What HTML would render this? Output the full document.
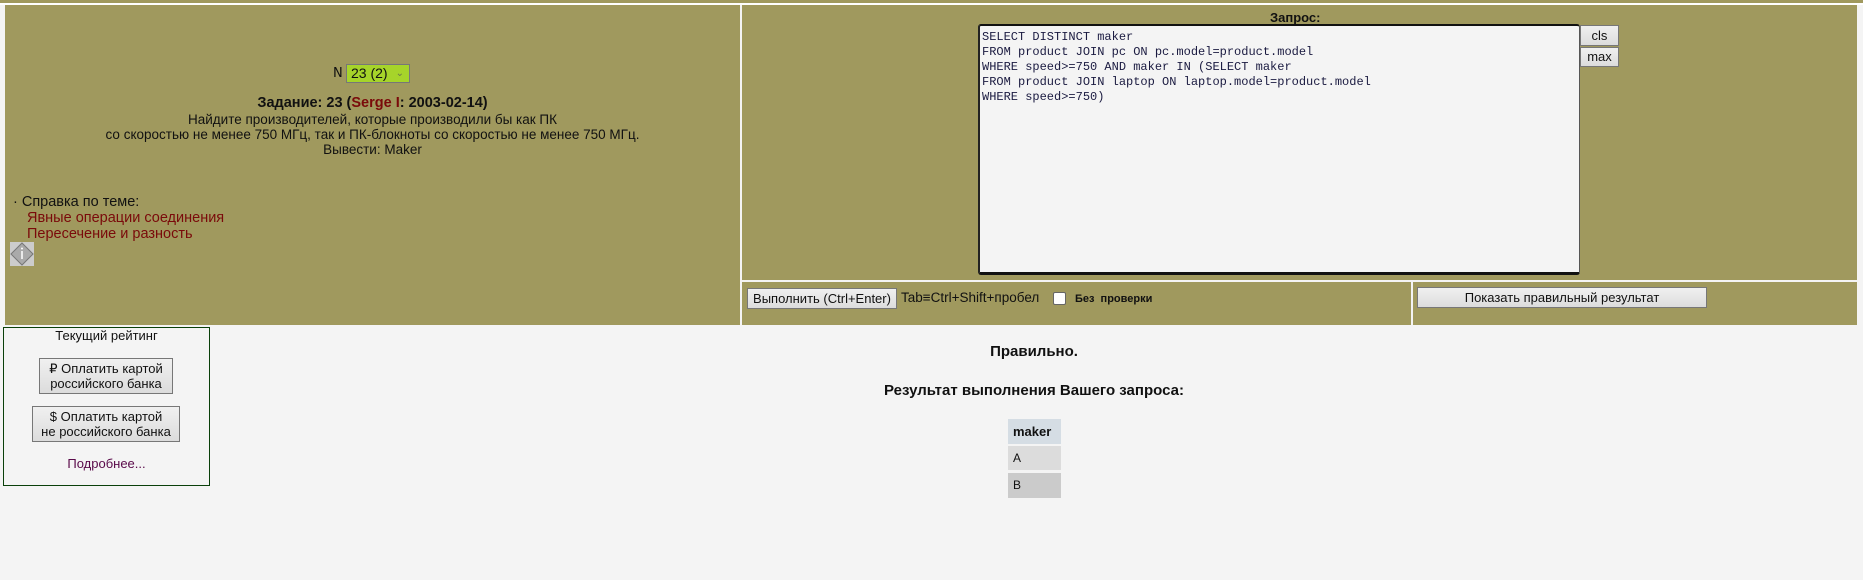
<!DOCTYPE html>
<html><head><meta charset="utf-8">
<style>
*{margin:0;padding:0;box-sizing:border-box}
body{width:1863px;height:580px;background:#f4f4f4;position:relative;overflow:hidden;font-family:"DejaVu Sans","Liberation Sans",sans-serif;color:#111}
.a{position:absolute}
.p{background:#a0995e}
.c{text-align:center}
.btn{position:absolute;background:linear-gradient(#f0f0f0,#dcdcdc);border:1px solid #777;font-family:"Liberation Sans",sans-serif;font-size:13px;color:#111;text-align:center}
a{color:#7a0a0a;text-decoration:none}
</style></head><body>
<div class="a" style="left:0;top:0;width:1863px;height:5px;background:#a0995e"></div>
<div class="a" style="left:0;top:3px;width:1863px;height:2px;background:#fff"></div>
<div class="a p" style="left:5px;top:5px;width:735px;height:320px"></div>
<div class="a p" style="left:742px;top:5px;width:1115px;height:275px"></div>
<div class="a p" style="left:742px;top:282px;width:669px;height:43px"></div>
<div class="a p" style="left:1413px;top:282px;width:444px;height:43px"></div>

<div class="a" style="left:333px;top:65px;font-size:13px;line-height:17px">N</div>
<div class="a" style="left:346px;top:64px;width:64px;height:19px;background:#a6d42a;border:1px solid #777;font-family:'Liberation Sans',sans-serif;font-size:14px;line-height:17px;padding-left:4px">23 (2)<span style="position:absolute;right:5px;top:0;color:#6a7a4a;font-size:10px">&#8964;</span></div>

<div class="a c" style="left:5px;top:95px;width:735px;font-family:'Liberation Sans',sans-serif;font-size:13px;line-height:15px">
<div style="font-weight:bold;font-size:14.5px;line-height:17px">Задание: 23 (<span style="color:#7a0a0a">Serge I</span>: 2003-02-14)</div>
<div style="font-size:13.5px">Найдите производителей, которые производили бы как ПК</div>
<div style="font-size:13.5px">со скоростью не менее 750 МГц, так и ПК-блокноты со скоростью не менее 750 МГц.</div>
<div style="font-size:13.5px">Вывести: Maker</div>
</div>

<div class="a" style="left:13px;top:194px;font-size:14.5px;line-height:16px;font-family:'Liberation Sans',sans-serif">
<div>· Справка по теме:</div>
<div style="padding-left:14px"><a>Явные операции соединения</a></div>
<div style="padding-left:14px"><a>Пересечение и разность</a></div>
</div>
<div class="a" style="left:10px;top:242px;width:24px;height:24px;background:#ccc">
<svg width="24" height="24" viewBox="0 0 24 24"><polygon points="12,1 23,12 12,23 1,12" fill="#aaa" stroke="#777"/><line x1="12" y1="9" x2="12" y2="17" stroke="#fff" stroke-width="1.5"/><circle cx="12" cy="6.5" r="1" fill="#fff"/></svg></div>

<div class="a" style="left:1270px;top:10px;font-family:'Liberation Sans',sans-serif;font-weight:bold;font-size:13px">Запрос:</div>
<div class="a" style="left:978px;top:24px;width:602px;height:251px;background:#f4f4f4;border:1px solid #555;border-top:2px solid #111;border-bottom:3px solid #111;border-left:2px solid #222;border-radius:3px;font-family:'Liberation Mono',monospace;font-size:12px;line-height:15px;padding:4px 2px;color:#1a1a40;white-space:pre">SELECT DISTINCT maker
FROM product JOIN pc ON pc.model=product.model
WHERE speed&gt;=750 AND maker IN (SELECT maker
FROM product JOIN laptop ON laptop.model=product.model
WHERE speed&gt;=750)</div>
<div class="btn" style="left:1580px;top:25px;width:39px;height:21px;line-height:19px">cls</div>
<div class="btn" style="left:1580px;top:47px;width:39px;height:20px;line-height:18px">max</div>

<div class="btn" style="left:747px;top:288px;width:150px;height:21px;line-height:19px">Выполнить (Ctrl+Enter)</div>
<div class="a" style="left:901px;top:289px;font-family:'Liberation Sans',sans-serif;font-size:13.5px;line-height:18px">Tab≡Ctrl+Shift+пробел</div>
<div class="a" style="left:1053px;top:292px;width:13px;height:13px;background:#fff;border:1px solid #666;border-radius:2px"></div>
<div class="a" style="left:1075px;top:291px;font-family:'Liberation Sans',sans-serif;font-size:11px;font-weight:bold;line-height:16px;word-spacing:3px">Без проверки</div>
<div class="btn" style="left:1417px;top:287px;width:290px;height:21px;line-height:19px">Показать правильный результат</div>

<div class="a" style="left:3px;top:327px;width:207px;height:159px;border:1px solid #0a400a"></div>
<div class="a c" style="left:3px;top:328px;width:207px;font-family:'Liberation Sans',sans-serif;font-size:13px">Текущий рейтинг</div>
<div class="btn" style="left:39px;top:358px;width:134px;height:36px;line-height:15px;padding-top:2px">₽ Оплатить картой<br>российского банка</div>
<div class="btn" style="left:32px;top:406px;width:148px;height:36px;line-height:15px;padding-top:2px">$ Оплатить картой<br>не российского банка</div>
<div class="a c" style="left:3px;top:456px;width:207px;font-family:'Liberation Sans',sans-serif;font-size:13px;color:#5a0a4a">Подробнее...</div>

<div class="a c" style="left:834px;top:343px;width:400px;font-family:'Liberation Sans',sans-serif;font-weight:bold;font-size:15px">Правильно.</div>
<div class="a c" style="left:784px;top:382px;width:500px;font-family:'Liberation Sans',sans-serif;font-weight:bold;font-size:15px">Результат выполнения Вашего запроса:</div>
<div class="a" style="left:1008px;top:419px;width:53px;height:25px;background:#d5dde4;font-family:'Liberation Sans',sans-serif;font-weight:bold;font-size:13px;line-height:25px;padding-left:5px">maker</div>
<div class="a" style="left:1008px;top:446px;width:53px;height:24px;background:#dcdcdc;font-family:'Liberation Sans',sans-serif;font-size:12px;line-height:24px;padding-left:5px">A</div>
<div class="a" style="left:1008px;top:473px;width:53px;height:25px;background:#cbcbcb;font-family:'Liberation Sans',sans-serif;font-size:12px;line-height:25px;padding-left:5px">B</div>
</body></html>
